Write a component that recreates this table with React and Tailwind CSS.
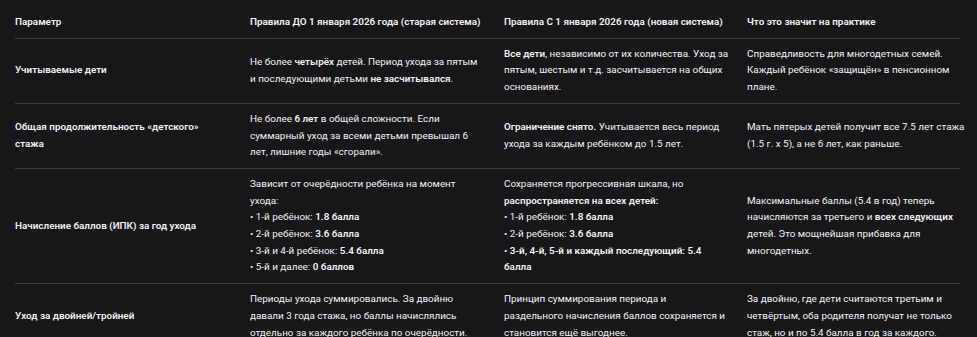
import React from "react";

const B = ({ children }) => <span className="font-semibold">{children}</span>;

const rows = [
  {
    p: "Учитываемые дети",
    a: (
      <>
        Не более <B>четырёх</B> детей. Период ухода за пятым
        <br />и последующими детьми <B>не засчитывался</B>.
      </>
    ),
    b: (
      <>
        <B>Все дети</B>, независимо от их количества. Уход за
        <br />пятым, шестым и т.д. засчитывается на общих
        <br />основаниях.
      </>
    ),
    c: (
      <>
        Справедливость для многодетных семей.
        <br />Каждый ребёнок «защищён» в пенсионном
        <br />плане.
      </>
    ),
  },
  {
    p: (
      <>
        Общая продолжительность «детского»
        <br />стажа
      </>
    ),
    a: (
      <>
        Не более <B>6 лет</B> в общей сложности. Если
        <br />суммарный уход за всеми детьми превышал 6
        <br />лет, лишние годы «сгорали».
      </>
    ),
    b: (
      <>
        <B>Ограничение снято.</B> Учитывается весь период
        <br />ухода за каждым ребёнком до 1.5 лет.
      </>
    ),
    c: (
      <>
        Мать пятерых детей получит все 7.5 лет стажа
        <br />(1.5 г. x 5), а не 6 лет, как раньше.
      </>
    ),
  },
  {
    p: "Начисление баллов (ИПК) за год ухода",
    a: (
      <>
        Зависит от очерёдности ребёнка на момент
        <br />ухода:
        <br />• 1‑й ребёнок: <B>1.8 балла</B>
        <br />• 2‑й ребёнок: <B>3.6 балла</B>
        <br />• 3‑й и 4‑й ребёнок: <B>5.4 балла</B>
        <br />• 5‑й и далее: <B>0 баллов</B>
      </>
    ),
    b: (
      <>
        Сохраняется прогрессивная шкала, но
        <br />
        <B>распространяется на всех детей:</B>
        <br />• 1‑й ребёнок: <B>1.8 балла</B>
        <br />• 2‑й ребёнок: <B>3.6 балла</B>
        <br />• <B>3‑й, 4‑й, 5‑й и каждый последующий: 5.4</B>
        <br />
        <B>балла</B>
      </>
    ),
    c: (
      <>
        Максимальные баллы (5.4 в год) теперь
        <br />начисляются за третьего и <B>всех следующих</B>
        <br />детей. Это мощнейшая прибавка для
        <br />многодетных.
      </>
    ),
  },
  {
    p: "Уход за двойней/тройней",
    a: (
      <>
        Периоды ухода суммировались. За двойню
        <br />давали 3 года стажа, но баллы начислялись
        <br />отдельно за каждого ребёнка по очерёдности.
      </>
    ),
    b: (
      <>
        Принцип суммирования периода и
        <br />раздельного начисления баллов сохраняется и
        <br />становится ещё выгоднее.
      </>
    ),
    c: (
      <>
        За двойню, где дети считаются третьим и
        <br />четвёртым, оба родителя получат не только
        <br />стаж, но и по 5.4 балла в год за каждого.
      </>
    ),
  },
];

export default function App() {
  return (
    <div className="min-h-screen w-full bg-[#171719] pt-[7px] font-['Roboto',sans-serif] text-[#f2f2f2]">
      <table className="ml-[15px] w-[945px] table-fixed border-collapse text-left text-[9.9px] leading-[16.7px]">
        <colgroup>
          <col className="w-[235px]" />
          <col className="w-[254px]" />
          <col className="w-[243px]" />
          <col className="w-[213px]" />
        </colgroup>
        <thead>
          <tr className="border-b border-[#3b3b3e]">
            <th className="whitespace-nowrap py-[7px] pr-4 align-middle font-semibold">Параметр</th>
            <th className="whitespace-nowrap py-[7px] pr-4 align-middle font-semibold">Правила ДО 1 января 2026 года (старая система)</th>
            <th className="whitespace-nowrap py-[7px] pr-4 align-middle font-semibold">Правила С 1 января 2026 года (новая система)</th>
            <th className="whitespace-nowrap py-[7px] align-middle font-semibold">Что это значит на практике</th>
          </tr>
        </thead>
        <tbody>
          {rows.map((r, i) => (
            <tr key={i} className="border-b border-[#3b3b3e]">
              <td className="whitespace-nowrap py-[7px] pr-4 align-middle font-semibold">{r.p}</td>
              <td className="whitespace-nowrap py-[7px] pr-4 align-middle">{r.a}</td>
              <td className="whitespace-nowrap py-[7px] pr-4 align-middle">{r.b}</td>
              <td className="whitespace-nowrap py-[7px] align-middle">{r.c}</td>
            </tr>
          ))}
        </tbody>
      </table>
    </div>
  );
}
